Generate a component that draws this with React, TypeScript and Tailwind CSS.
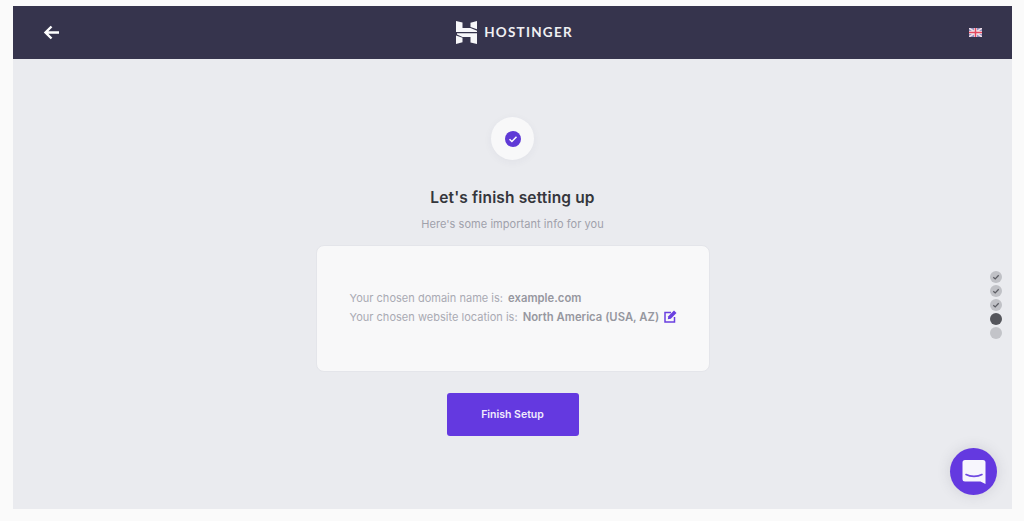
import React from "react";

function Logo() {
  return (
    <svg width="21" height="23" viewBox="0 0 21 23" fill="#f7f7f9">
      <path d="M0 0l6.500 1.500V7H14.500l6.500 2.800V11H0z" />
      <path d="M14.500 1.800L21 0v8.300L14.500 6z" />
      <path d="M1 12.300h20V23l-6.500-1.500V16H6.500L1 13.500z" />
      <path d="M0 14.500l6.500 2.200V21.200L0 23z" />
    </svg>
  );
}

function Flag() {
  return (
    <svg width="13" height="9" viewBox="0 0 13 9">
      <rect width="13" height="9" fill="#8f8fc0" />
      <path d="M0 0l13 9M13 0L0 9" stroke="#f1dfe6" strokeWidth="1.6" />
      <path d="M6.500 0v9M0 4.500h13" stroke="#f2e6ea" strokeWidth="3" />
      <path d="M6.500 0v9M0 4.500h13" stroke="#e2475f" strokeWidth="1.500" />
    </svg>
  );
}

function StepCheck() {
  return (
    <div className="flex h-3 w-3 items-center justify-center rounded-full bg-[#c0c1c6]">
      <svg width="8" height="8" viewBox="0 0 8 8" fill="none">
        <path d="M1.300 4.200l1.900 1.700 3.500-3.600" stroke="#5c5d64" strokeWidth="1.300" />
      </svg>
    </div>
  );
}

export default function App() {
  return (
    <div className="h-[521px] w-[1024px] overflow-hidden bg-[#fafafa] pb-3 pl-[13px] pr-3 pt-1.5 font-['Inter',sans-serif]">
      <div className="relative flex h-[503px] flex-col bg-[#eaebef]">
        <header className="flex h-[53px] items-center justify-between bg-[#36344d] px-[30px]">
          <svg width="17" height="15" viewBox="0 0 17 15" fill="none" stroke="#ffffff" strokeWidth="2.400">
            <path d="M16 7.500H2.500M8.500 1.500l-6 6 6 6" />
          </svg>
          <div className="flex items-center gap-[7px]">
            <Logo />
            <span className="text-[13.500px] font-bold tracking-[1.250px] text-[#f0f0f3] font-['Lato',sans-serif]">HOSTINGER</span>
          </div>
          <Flag />
        </header>

        <main className="flex flex-col items-center pt-[58px]">
          <div className="flex h-[43px] w-[43px] items-center justify-center rounded-full bg-[#f8f8f9] shadow-[0_2px_8px_rgba(60,60,90,0.05)]">
            <svg width="16" height="16" viewBox="0 0 16 16" fill="none">
              <circle cx="8" cy="8" r="8" fill="#5f39d6" />
              <path d="M4.500 8.200l2.400 2.300 4.600-4.700" stroke="#ffffff" strokeWidth="1.500" />
            </svg>
          </div>
          <h1 className="mt-[28px] text-[15.500px] font-semibold leading-5 tracking-[0.150px] text-[#35363c]">Let's finish setting up</h1>
          <p className="mt-[9px] text-[11px] leading-[14px] tracking-[0.050px] text-[#a0a1ab]">Here's some important info for you</p>
          <section className="mt-[14px] flex h-[127px] w-[394px] flex-col justify-center gap-[5px] rounded-lg border border-[#e4e5ea] bg-[#f8f8f9] pb-[3px] pl-[33px] text-[11px] leading-[14px] tracking-[0.020px] text-[#a9aab3]">
            <div className="flex items-center gap-[5px]">
              <span>Your chosen domain name is:</span>
              <span className="text-[11.250px] font-semibold text-[#96979f]">example.com</span>
            </div>
            <div className="flex items-center gap-[5px]">
              <span>Your chosen website location is:</span>
              <span className="text-[11.250px] font-semibold text-[#96979f]">North America (USA, AZ)</span>
              <svg width="13" height="13" viewBox="0 0 13 13" fill="none">
                <path d="M7 2.500H1v9.500h9.500V7" stroke="#6a3fe0" strokeWidth="1.500" />
                <path d="M3.800 9.300l.5-3L10 .6l2.500 2.500L6.800 8.800z" fill="#6a3fe0" />
              </svg>
            </div>
          </section>
          <button className="mt-[21px] flex h-[43px] w-[132px] items-center justify-center rounded-[3px] bg-[#6439e0] text-[10.500px] font-semibold text-[#f0ecfc]">
            Finish Setup
          </button>
        </main>

        <div className="absolute right-[10px] top-[265px] flex flex-col items-center gap-[2px]">
          <StepCheck />
          <StepCheck />
          <StepCheck />
          <div className="h-3 w-3 rounded-full bg-[#55565c]" />
          <div className="h-3 w-3 rounded-full bg-[#c3c4c9]" />
        </div>

        <div className="absolute bottom-[14px] right-[15px] flex h-[47px] w-[47px] items-center justify-center rounded-full bg-[#6439e0] shadow-[0_0_14px_rgba(60,60,80,0.15)]">
          <svg width="24" height="26" viewBox="0 0 24 26" fill="none">
            <path d="M3 1h18a2.500 2.500 0 0 1 2.500 2.500V25L18.500 22.500H3A2.500 2.500 0 0 1 .5 20V3.500A2.500 2.500 0 0 1 3 1z" fill="#f7f6fd" />
            <path d="M4 15.500c4.500 2.500 11.500 2.500 16 0" stroke="#6f4ae2" strokeWidth="1.600" strokeLinecap="round" />
          </svg>
        </div>
      </div>
    </div>
  );
}
